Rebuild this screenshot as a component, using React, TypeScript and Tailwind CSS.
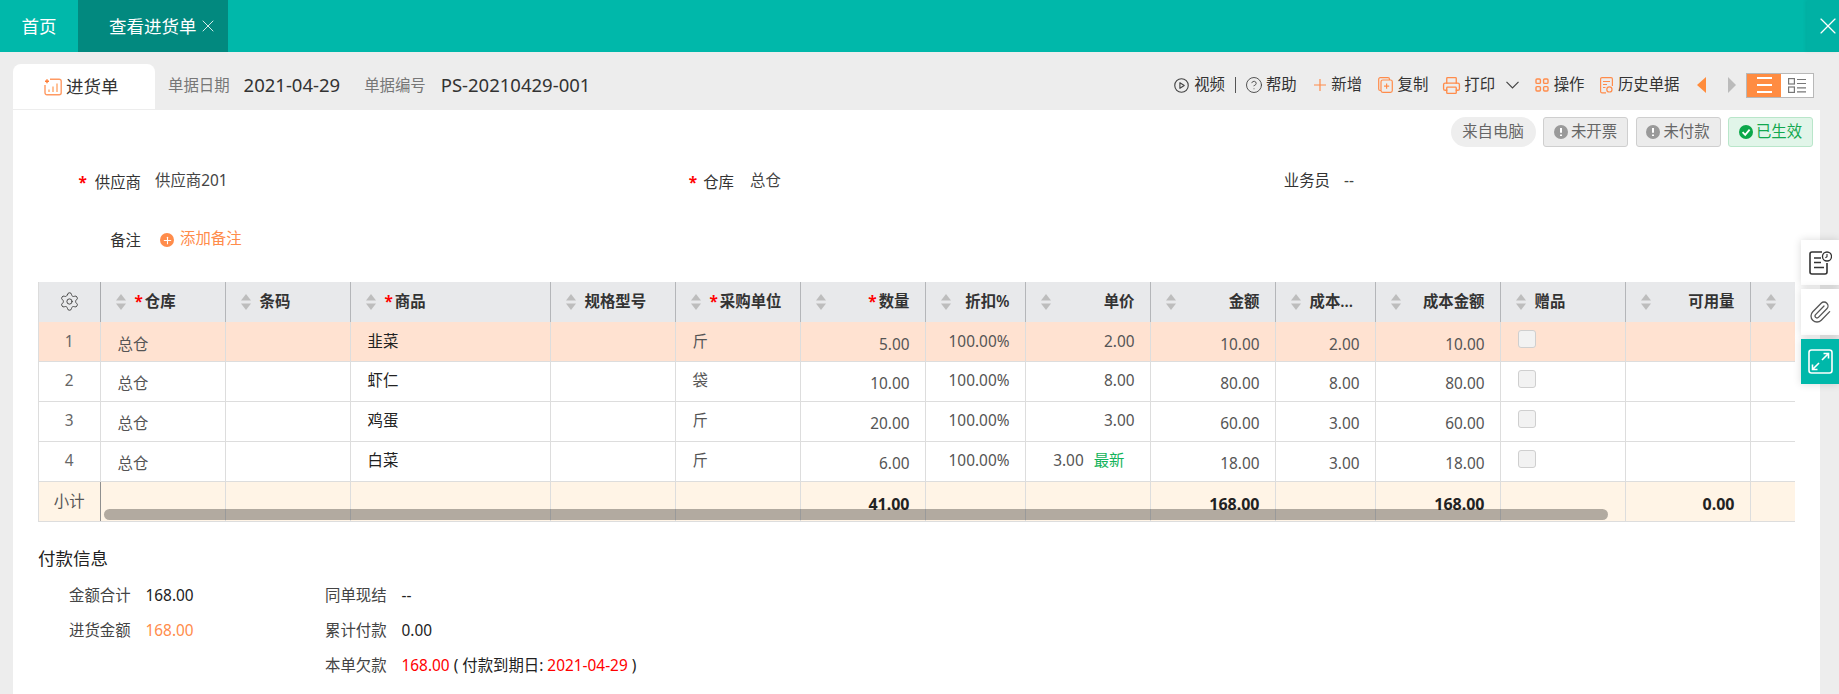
import * as React from 'react';
import { CircleHelp, Paperclip, Plus, Printer, Settings, X } from 'lucide-react';

const font = { fontFamily: '"Noto Sans", "Noto Sans CJK SC", sans-serif' };

interface Column {
  key: string;
  label: string;
  width: string;
  required?: boolean;
  right?: boolean;
  low?: boolean;
}

const columns: Column[] = [
  { key: 'store', label: '仓库', width: 'w-[125px]', required: true, low: true },
  { key: 'barcode', label: '条码', width: 'w-[125px]' },
  { key: 'goods', label: '商品', width: 'w-[200px]', required: true },
  { key: 'spec', label: '规格型号', width: 'w-[125px]' },
  { key: 'unit', label: '采购单位', width: 'w-[125px]', required: true },
  { key: 'qty', label: '数量', width: 'w-[125px]', required: true, right: true, low: true },
  { key: 'discount', label: '折扣%', width: 'w-[100px]', right: true },
  { key: 'price', label: '单价', width: 'w-[125px]', right: true },
  { key: 'amount', label: '金额', width: 'w-[125px]', right: true, low: true },
  { key: 'cost', label: '成本...', width: 'w-[100px]', right: true, low: true },
  { key: 'costAmount', label: '成本金额', width: 'w-[125px]', right: true, low: true },
  { key: 'gift', label: '赠品', width: 'w-[125px]' },
  { key: 'available', label: '可用量', width: 'w-[125px]', right: true },
];

const rows: Record<string, string>[] = [
  { store: '总仓', goods: '韭菜', unit: '斤', qty: '5.00', discount: '100.00%', price: '2.00', amount: '10.00', cost: '2.00', costAmount: '10.00' },
  { store: '总仓', goods: '虾仁', unit: '袋', qty: '10.00', discount: '100.00%', price: '8.00', amount: '80.00', cost: '8.00', costAmount: '80.00' },
  { store: '总仓', goods: '鸡蛋', unit: '斤', qty: '20.00', discount: '100.00%', price: '3.00', amount: '60.00', cost: '3.00', costAmount: '60.00' },
  { store: '总仓', goods: '白菜', unit: '斤', qty: '6.00', discount: '100.00%', price: '3.00', amount: '18.00', cost: '3.00', costAmount: '18.00' },
];

const totals: Record<string, string> = { qty: '41.00', amount: '168.00', costAmount: '168.00', available: '0.00' };

function SortArrows() {
  return (
    <svg width="10" height="16" viewBox="0 0 10 16" className="shrink-0">
      <path d="M5 0 10 6.500H0Z" fill="#bdbdbd" />
      <path d="M5 16 0 9.500H10Z" fill="#bdbdbd" />
    </svg>
  );
}

function Star() {
  return <span className="mr-[2px] font-bold text-[#ff0000]">*</span>;
}

function PlayIcon() {
  return (
    <svg width="15" height="15" viewBox="0 0 16 16" fill="none" stroke="#444" strokeWidth="1.200" className="shrink-0">
      <circle cx="8" cy="8" r="7.200" />
      <path d="M6.300 5v6l4.600-3z" strokeLinejoin="round" />
    </svg>
  );
}

function CopyIcon() {
  return (
    <svg width="15" height="16" viewBox="0 0 15 16" fill="none" stroke="#ff8c4b" strokeWidth="1.200" className="shrink-0">
      <path d="M3 13.500H2.200A1.500 1.500 0 0 1 .7 12V2.200A1.500 1.500 0 0 1 2.200.7H10a1.500 1.500 0 0 1 1.500 1.500V3" />
      <rect x="3" y="3" width="11.300" height="12.300" rx="1.800" />
      <path d="M8.600 6.500v5.200M6 9.100h5.200" />
    </svg>
  );
}

function GridIcon() {
  return (
    <svg width="14" height="14" viewBox="0 0 14 14" fill="none" stroke="#ff8c4b" strokeWidth="1.400" className="shrink-0">
      <rect x="1" y="1" width="4.400" height="4.400" rx="1" />
      <rect x="8.600" y="1" width="4.400" height="4.400" rx="1" />
      <rect x="1" y="8.600" width="4.400" height="4.400" rx="1" />
      <rect x="8.600" y="8.600" width="4.400" height="4.400" rx="1" />
    </svg>
  );
}

function HistoryIcon() {
  return (
    <svg width="13" height="17" viewBox="0 0 13 17" fill="none" stroke="#ff8c4b" strokeWidth="1.200" className="shrink-0">
      <path d="M6 15.800H2A1.400 1.400 0 0 1 .6 14.400V2A1.400 1.400 0 0 1 2 .6h9A1.400 1.400 0 0 1 12.400 2v7" />
      <path d="M3 4.500h7M3 7.500h4M3 10.500h2.500" />
      <circle cx="9.400" cy="12.400" r="2.600" />
    </svg>
  );
}

function ChartIcon() {
  return (
    <svg width="18" height="18" viewBox="0 0 18 18" fill="none" strokeWidth="1.400" className="shrink-0">
      <path d="M6 1.200h9.200a2 2 0 0 1 2 2v11.600a2 2 0 0 1-2 2H3a2 2 0 0 1-2-2V7" stroke="#ff9a63" />
      <path d="M1 3.200h4M3 1.200v4" stroke="#ff7d36" />
      <path d="M5 14v-2.500M9 14V8.500M13 14V5.500" stroke="#ffb37f" strokeWidth="1.600" />
    </svg>
  );
}

function ToolText({ children }: { children: React.ReactNode }) {
  return <span className="ml-[5px] text-[15.4px] leading-[20px] text-[#333]">{children}</span>;
}

function Toolbar() {
  return (
    <div className="flex h-[45px] items-center pb-[3px]">
      <PlayIcon />
      <ToolText>视频</ToolText>
      <span className="ml-[10.5px] h-[16px] w-px bg-[#555]" />
      <CircleHelp size={18} strokeWidth={1.2} color="#444" className="-mr-[2px] ml-[8.5px]" />
      <ToolText>帮助</ToolText>
      <svg width="12" height="12" viewBox="0 0 12 12" stroke="#ff8c4b" strokeWidth="1.200" className="ml-[17.5px]">
        <path d="M6 0v12M0 6h12" />
      </svg>
      <ToolText>新增</ToolText>
      <span className="ml-[15.5px] flex"><CopyIcon /></span>
      <ToolText>复制</ToolText>
      <Printer size={19} strokeWidth={1.7} color="#ff8c4b" className="-mr-[2px] ml-[14px]" />
      <ToolText>打印</ToolText>
      <svg width="13" height="8" viewBox="0 0 13 8" fill="none" stroke="#444" strokeWidth="1.200" className="ml-[11px]">
        <path d="M.5.8 6.500 6.800 12.500.8" />
      </svg>
      <span className="ml-[15.5px] flex"><GridIcon /></span>
      <ToolText>操作</ToolText>
      <span className="ml-[15.5px] flex"><HistoryIcon /></span>
      <ToolText>历史单据</ToolText>
      <svg width="9" height="16" viewBox="0 0 9 16" className="ml-[17.5px]"><path d="M9 0v16L0 8z" fill="#ff8c3c" /></svg>
      <svg width="8" height="16" viewBox="0 0 8 16" className="ml-[22px]"><path d="M0 0v16l8-8z" fill="#bbb" /></svg>
      <div className="ml-[10px] flex h-[25px] w-[68px] border border-[#b8b8b8] bg-white">
        <div className="flex w-[34px] flex-col items-center justify-center gap-[5px] bg-[#ff8c42]">
          <span className="h-[2px] w-[15px] bg-white" />
          <span className="h-[2px] w-[15px] bg-white" />
          <span className="h-[2px] w-[15px] bg-white" />
        </div>
        <div className="flex flex-1 items-center justify-center">
          <svg width="18" height="15" viewBox="0 0 18 15" fill="none" stroke="#777" strokeWidth="1.200">
            <rect x=".6" y=".6" width="5.800" height="5.400" />
            <rect x=".6" y="9" width="5.800" height="5.400" />
            <path d="M9 1.500h9M9 5.500h9M9 9.800h9M9 13.800h9" />
          </svg>
        </div>
      </div>
    </div>
  );
}

function StatusTag({ children, tone }: { children: React.ReactNode; tone: 'gray' | 'green' }) {
  const green = tone === 'green';
  return (
    <div
      className={`flex h-[30px] w-[85px] items-center justify-center gap-[3px] rounded-[3px] border text-[15.4px] ${
        green ? 'border-[#b9e6ca] bg-[#e1f5e9] text-[#12a84f]' : 'border-[#cfcfcf] bg-[#ececec] text-[#666]'
      }`}
    >
      <svg width="14" height="14" viewBox="0 0 14 14" className="shrink-0">
        <circle cx="7" cy="7" r="7" fill={green ? '#0aa84a' : '#9a9a9a'} />
        {green ? (
          <path d="M3.600 7.200 6.200 9.800 10.600 4.600" fill="none" stroke="#fff" strokeWidth="1.800" />
        ) : (
          <path d="M7 3v4.800M7 9.400v1.700" fill="none" stroke="#fff" strokeWidth="2" />
        )}
      </svg>
      {children}
    </div>
  );
}

function PurchaseTable() {
  return (
    <div className="relative ml-[25px] w-[1756px]">
      <table className="w-[1756px] table-fixed border-collapse text-[15.4px]">
        <colgroup>
          <col className="w-[61.5px]" />
          {columns.map((c) => (
            <col key={c.key} className={c.width} />
          ))}
          <col className="w-[44.5px]" />
        </colgroup>
        <thead>
          <tr className="h-[40px] bg-[#e8e9eb]">
            <th className="border-l border-r border-[#dcdcdc] border-r-[#a9abae] p-0">
              <span className="flex justify-center pb-[2px]">
                <Settings size={21} strokeWidth={1.1} color="#444" />
              </span>
            </th>
            {columns.map((c) => (
              <th key={c.key} className="border-r border-[#b4b6b9] p-0 font-semibold text-[#333]">
                <div className="flex items-center pl-[15px] pr-[15px]">
                  <SortArrows />
                  <span className={`ml-[9px] flex-1 leading-[22px] ${c.right && c.key !== 'cost' ? 'text-right' : 'text-left'}`}>
                    {c.required && <Star />}
                    {c.label}
                  </span>
                </div>
              </th>
            ))}
            <th className="p-0">
              <div className="flex pl-[15px]"><SortArrows /></div>
            </th>
          </tr>
        </thead>
        <tbody>
          {rows.map((row, i) => (
            <tr key={i} className={i === 0 ? 'h-[39px] bg-[#ffe2d1]' : 'h-[40px] bg-white'}>
              <td className="border border-t-0 border-[#dddddd] p-0 text-center text-[#666]">{i + 1}</td>
              {columns.map((c) => (
                <td
                  key={c.key}
                  className={`border border-t-0 border-l-0 border-[#dddddd] p-0 ${c.right ? 'pr-[15px] text-right' : 'pl-[17px]'} ${
                    c.low ? 'pt-[6px]' : ''
                  } ${c.key === 'goods' ? 'text-[#222]' : 'text-[#555]'}`}
                >
                  {c.key === 'gift' ? (
                    <span className="mb-[5px] block h-[18px] w-[18px] rounded-[3px] border border-[#cfcfcf] bg-[#f2f2f2]" />
                  ) : c.key === 'price' && i === 3 ? (
                    <span className="pr-[10px]">
                      {row.price}
                      <span className="ml-[10px] text-[#12b35a]">最新</span>
                    </span>
                  ) : (
                    row[c.key]
                  )}
                </td>
              ))}
              <td className="border-b border-[#dddddd] p-0" />
            </tr>
          ))}
          <tr className="h-[40px] bg-[#fff4e6]">
            <td className="border-b border-l border-r border-[#dddddd] border-r-[#8f8f8f] p-0 pt-[2px] text-center text-[#555]">小计</td>
            {columns.map((c) => (
              <td
                key={c.key}
                className="border-r border-b border-[#dddddd] p-0 pr-[15px] pt-[6px] text-right text-[16px] font-bold leading-[20px] text-[#222]"
              >
                {totals[c.key]}
              </td>
            ))}
            <td className="border-b border-[#dddddd] p-0" />
          </tr>
        </tbody>
      </table>
      <div className="absolute bottom-[2px] left-[66px] h-[11px] w-[1504px] rounded-full bg-black/30" />
    </div>
  );
}

function PayLine({ label, children }: { label: string; children?: React.ReactNode }) {
  return (
    <div className="flex h-[24px] items-center">
      <span className="w-[76.5px] text-[#444]">{label}</span>
      <span className="text-[#222]">{children}</span>
    </div>
  );
}

export default function App() {
  return (
    <div style={font} className="relative flex h-[694px] w-[1839px] flex-col overflow-hidden bg-[#ededed]">
      <div className="flex h-[52px] shrink-0 bg-[#00b8aa] text-[17.5px] text-white">
        <div className="flex w-[78px] items-center justify-center">首页</div>
        <div className="flex w-[150px] items-center bg-[#02897f] pl-[31px]">
          查看进货单
          <X size={20} strokeWidth={1} className="ml-[1px]" />
        </div>
        <div className="ml-auto flex w-[32px] items-center justify-center bg-[#00b1a4] shadow-[-2px_0_3px_rgba(0,0,0,0.05)]">
          <X size={28} strokeWidth={1} className="ml-[10px] shrink-0" />
        </div>
      </div>

      <div className="flex h-[58px] shrink-0 pl-[13px] pr-[25px]">
        <div className="mt-[12px] flex h-[45px] w-[142px] items-center gap-[4px] rounded-t-[8px] bg-white pl-[31px]">
          <ChartIcon />
          <span className="text-[17.5px] text-[#333]">进货单</span>
        </div>
        <div className="mt-[12px] flex h-[45px] items-center pb-[1px]">
          <span className="ml-[13px] text-[15.4px] text-[#777]">单据日期</span>
          <span className="ml-[14px] pb-[3px] text-[18.5px] text-[#333]">2021-04-29</span>
          <span className="ml-[24px] text-[15.4px] text-[#777]">单据编号</span>
          <span className="ml-[15px] pb-[3px] text-[18.5px] text-[#333]">PS-20210429-001</span>
        </div>
        <div className="ml-auto mt-[12px]">
          <Toolbar />
        </div>
      </div>

      <div className="ml-[13px] mr-[19px] flex-1 bg-white text-[15.4px]">
        <div className="flex justify-end gap-[7.5px] pr-[7px] pt-[7px]">
          <div className="flex h-[30px] w-[85px] items-center justify-center rounded-full bg-[#eeeeee] text-[#666]">来自电脑</div>
          <StatusTag tone="gray">未开票</StatusTag>
          <StatusTag tone="gray">未付款</StatusTag>
          <StatusTag tone="green">已生效</StatusTag>
        </div>

        <div className="mt-[22px] flex h-[24px] items-center">
          <div className="flex w-[611px] items-center">
            <span className="w-[128px] pt-[3px] text-right text-[#333]">
              <span className="mr-[2px]"><Star /></span> 供应商
            </span>
            <span className="ml-[14px] text-[#444]">供应商201</span>
          </div>
          <div className="flex w-[611px] items-center">
            <span className="w-[110px] pt-[3px] text-right text-[#333]">
              <Star /> 仓库
            </span>
            <span className="ml-[16px] text-[#444]">总仓</span>
          </div>
          <div className="flex items-center">
            <span className="w-[95px] text-right text-[#333]">业务员</span>
            <span className="ml-[14px] text-[#444]">--</span>
          </div>
        </div>

        <div className="mt-[35px] flex h-[24px] items-center">
          <span className="w-[128px] pt-[2px] text-right text-[#333]">备注</span>
          <span className="ml-[19px] flex h-[14px] w-[14px] items-center justify-center rounded-full bg-[#ff8c4b]">
            <Plus size={11} strokeWidth={2.4} color="#fff" />
          </span>
          <span className="ml-[6px] pb-[3px] text-[#ff8c4b]">添加备注</span>
        </div>

        <div className="mt-[30px]">
          <PurchaseTable />
        </div>

        <div className="ml-[25px] mt-[23.5px] h-[26px] text-[17.5px] leading-[26px] text-[#222]">付款信息</div>
        <div className="ml-[56px] mt-[13px] grid grid-cols-[256px_1fr] gap-y-[11px]">
          <PayLine label="金额合计">168.00</PayLine>
          <PayLine label="同单现结">--</PayLine>
          <PayLine label="进货金额"><span className="text-[#ff8c4b]">168.00</span></PayLine>
          <PayLine label="累计付款">0.00</PayLine>
          <div />
          <PayLine label="本单欠款">
            <span className="text-[#ff0000]">168.00</span> ( 付款到期日: <span className="text-[#ff0000]">2021-04-29</span> )
          </PayLine>
        </div>
      </div>

      <div className="absolute right-0 top-[240px] flex w-[38px] flex-col gap-[4px]">
        <div className="flex h-[45px] items-center justify-center bg-white shadow-[0_0_8px_rgba(0,0,0,0.15)]">
          <svg width="24" height="26" viewBox="0 0 24 26" fill="none" stroke="#333" strokeWidth="1.600">
            <path d="M14 2H4a2 2 0 0 0-2 2v18a2 2 0 0 0 2 2h13a2 2 0 0 0 2-2v-9" />
            <path d="M6 8h7M6 12.500h7M6 17.500h10" />
            <circle cx="19" cy="6.500" r="4.500" strokeWidth="1.300" />
            <path d="M19 4v2.800l-1.600 1" strokeWidth="1.100" />
          </svg>
        </div>
        <div className="flex h-[46px] items-center justify-center bg-white shadow-[0_0_8px_rgba(0,0,0,0.15)]">
          <Paperclip size={24} strokeWidth={1.3} color="#555" />
        </div>
        <div className="flex h-[45px] items-center justify-center bg-[#00b8aa] shadow-[0_0_8px_rgba(0,0,0,0.15)]">
          <svg width="25" height="25" viewBox="0 0 25 25" fill="none" stroke="#fff" strokeWidth="1.600">
            <rect x="1" y="1" width="23" height="23" rx="2.500" />
            <path d="M14 11 20 5M15.500 4.500h5v5M11 14 5 20M4.500 15.500v5h5" />
          </svg>
        </div>
      </div>
    </div>
  );
}
